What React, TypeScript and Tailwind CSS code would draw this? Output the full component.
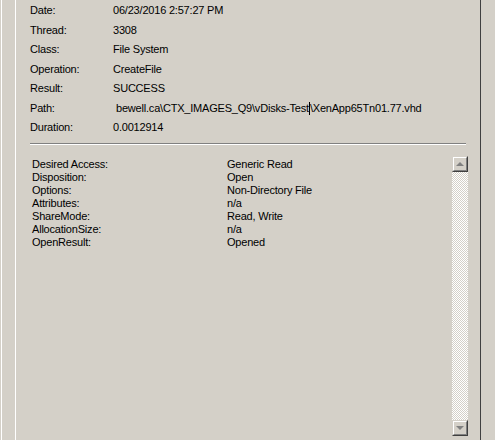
import React from "react";

const topRows: [string, string][] = [
  ["Date:", "06/23/2016 2:57:27 PM"],
  ["Thread:", "3308"],
  ["Class:", "File System"],
  ["Operation:", "CreateFile"],
  ["Result:", "SUCCESS"],
  ["Path:", "PATH"],
  ["Duration:", "0.0012914"],
];

const detailRows: [string, string][] = [
  ["Desired Access:", "Generic Read"],
  ["Disposition:", "Open"],
  ["Options:", "Non-Directory File"],
  ["Attributes:", "n/a"],
  ["ShareMode:", "Read, Write"],
  ["AllocationSize:", "n/a"],
  ["OpenResult:", "Opened"],
];

const ScrollButton = ({ up }: { up: boolean }) => (
  <div className="w-4 h-4 border-r border-b border-[#404040] border-t border-l border-t-[#d4d0c8] border-l-[#d4d0c8] bg-[#d4d0c8]">
    <div className="w-full h-full border-t border-l border-white border-r border-b border-r-[#808080] border-b-[#808080] flex items-center justify-center">
      {up ? (
        <div className="w-0 h-0 border-l-[4px] border-r-[4px] border-b-[4px] border-l-transparent border-r-transparent border-b-[#808080]" />
      ) : (
        <div className="w-0 h-0 border-l-[4px] border-r-[4px] border-t-[4px] border-l-transparent border-r-transparent border-t-[#808080]" />
      )}
    </div>
  </div>
);

export default function App() {
  return (
    <div
      className="w-[495px] h-[440px] bg-[#d4d0c8] flex text-black text-[11px] tracking-[-0.2px] overflow-hidden"
      style={{ fontFamily: '"Liberation Sans", Arial, sans-serif' }}
    >
      {/* left frame edges */}
      <div className="w-px h-full bg-[#d4d0c8]" />
      <div className="w-px h-full bg-white" />
      <div className="w-[13px] h-full" />
      <div className="w-px h-full bg-white" />

      {/* main panel */}
      <div className="w-[464px] h-full flex flex-col pl-[14px]">
        <div className="flex flex-col pt-px">
          {topRows.map(([label, value]) => (
            <div key={label} className="flex h-[19.5px] leading-[19.5px]">
              <div className="w-[83px]">{label}</div>
              {value === "PATH" ? (
                <div className="ml-[3px] flex whitespace-nowrap">
                  bewell.ca\CTX_IMAGES_Q9\vDisks-Test
                  <span className="w-px h-[13px] mt-[3px] bg-black" />
                  \XenApp65Tn01.77.vhd
                </div>
              ) : (
                <div>{value}</div>
              )}
            </div>
          ))}
        </div>

        {/* etched separator */}
        <div className="mt-[5.5px] w-[436px]">
          <div className="h-px bg-[#808080]" />
          <div className="h-px bg-white" />
        </div>

        {/* details list */}
        <div className="mt-[11px] h-[280px] w-[438px] flex">
          <div className="flex-1 pl-[2px] pt-[1.5px]">
            {detailRows.map(([label, value]) => (
              <div key={label} className="flex h-[13px] leading-[13px]">
                <div className="w-[195px]">{label}</div>
                <div>{value}</div>
              </div>
            ))}
          </div>
          <div className="w-4 h-full flex flex-col">
            <ScrollButton up />
            <div className="flex-1 bg-[repeating-conic-gradient(#ffffff_0%_25%,#d4d0c8_0%_50%)] bg-[length:2px_2px]" />
            <ScrollButton up={false} />
          </div>
        </div>
      </div>

      {/* right frame edge */}
      <div className="w-px h-full bg-[#404040]" />
      <div className="flex-1 h-full" />
    </div>
  );
}
